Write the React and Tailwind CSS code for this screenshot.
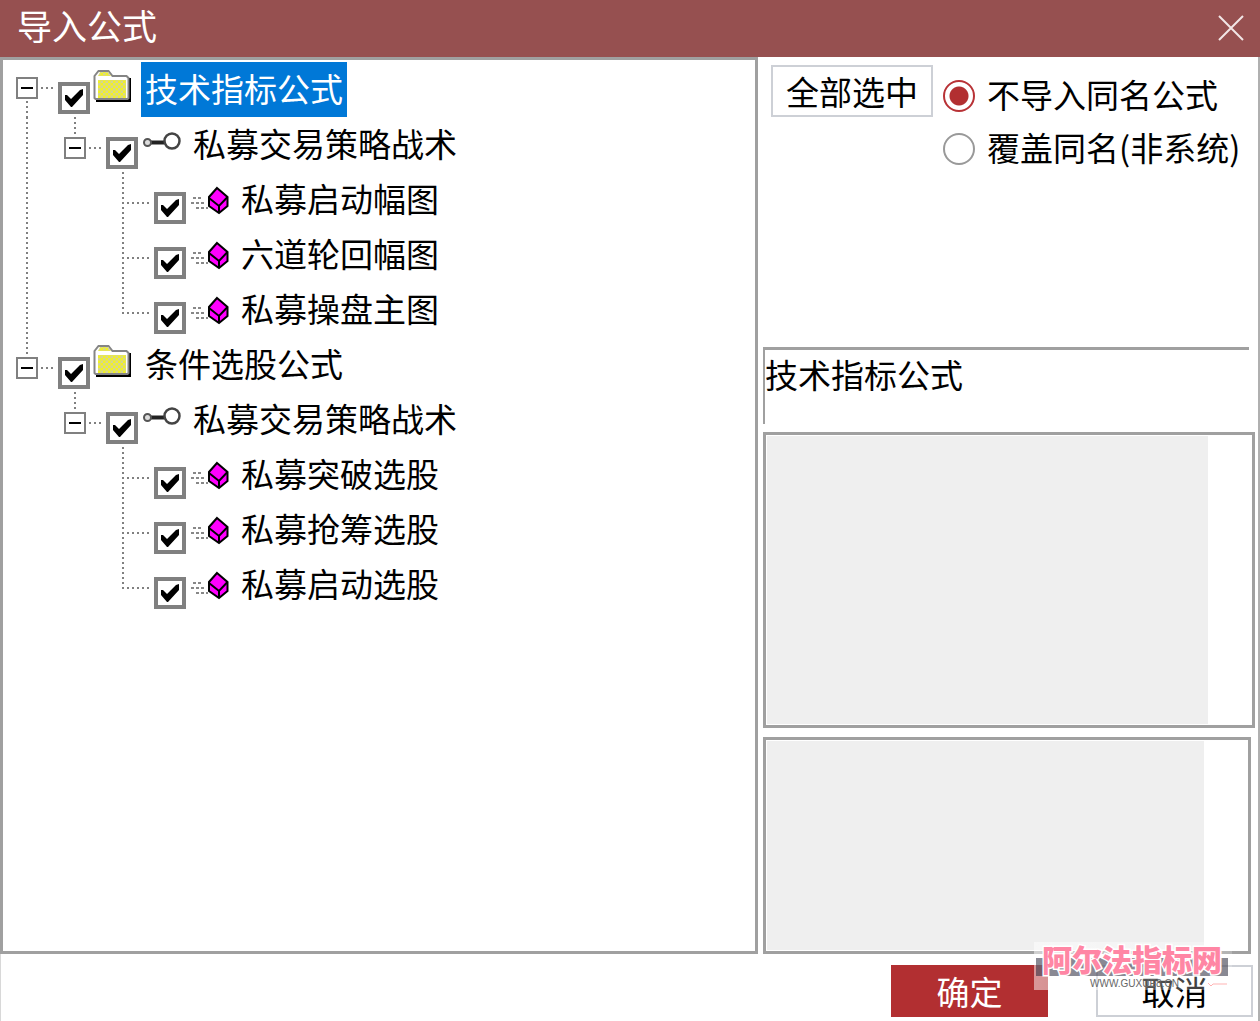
import { useState } from 'react';

const TREE = [
    {
        label: '技术指标公式',
        children: [
            { label: '私募交易策略战术', children: [{ label: '私募启动幅图' }, { label: '六道轮回幅图' }, { label: '私募操盘主图' }] },
        ],
    },
    {
        label: '条件选股公式',
        children: [
            { label: '私募交易策略战术', children: [{ label: '私募突破选股' }, { label: '私募抢筹选股' }, { label: '私募启动选股' }] },
        ],
    },
];

const V_DOTS = 'w-0.5 bg-[repeating-linear-gradient(to_bottom,#808080_0_2px,transparent_2px_5px)]';
const H_DOTS = 'h-0.5 bg-[repeating-linear-gradient(to_right,#808080_0_2px,transparent_2px_5px)]';

const FolderIcon = () => (
    <svg className="size-10" viewBox="0 0 40 40" aria-hidden="true">
        <defs>
            <pattern id="dither" width="5" height="5" patternUnits="userSpaceOnUse">
                <rect width="5" height="5" fill="#f2f224" />
                <rect width="2.500" height="2.500" fill="#d6d690" />
                <rect x="2.500" y="2.500" width="2.500" height="2.500" fill="#d6d690" />
            </pattern>
        </defs>
        <path d="M3 31h31V10h4v24H3z" fill="#000" />
        <path d="M1.500 30V8l4-5h10l4 5h14l2 2v20l-1 1h-32z" fill="#fff" stroke="#858585" strokeWidth="2" />
        <path d="M5 8l2-4h8l3 4H5z" fill="url(#dither)" />
        <path d="M5 12h28v18H5z" fill="url(#dither)" />
    </svg>
);

const KeyIcon = () => (
    <svg className="size-10" viewBox="0 0 40 40" fill="none" aria-hidden="true">
        <path d="M10 19.500h13" stroke="#222" strokeWidth="4" />
        <circle cx="6.500" cy="19.500" r="3.500" fill="#ddd" stroke="#555" strokeWidth="2" />
        <circle cx="31" cy="18" r="7.500" fill="#fff" stroke="#444" strokeWidth="2.500" />
    </svg>
);

const CubeIcon = () => (
    <svg className="size-10" viewBox="0 0 40 40" aria-hidden="true">
        <g fill="none" stroke="#888" strokeWidth="2" strokeDasharray="3 2">
            <path d="M4 20h10" />
            <path d="M2 25h15" />
            <path d="M7 30h12" />
        </g>
        <path d="M28 10l10.500 9v9L30 35l-10-7v-9z" fill="#f0f" stroke="#000" strokeWidth="2" />
        <path d="M20 20l10 8 8.500-9M30 28v7" fill="none" stroke="#000" strokeWidth="2" />
    </svg>
);

const ICONS = [FolderIcon, KeyIcon, CubeIcon];

const TreeCheckbox = ({ label }) => (
    <span className="mt-5 grid size-8 shrink-0 self-start">
        <input
            type="checkbox"
            defaultChecked
            aria-label={label}
            className="peer col-start-1 row-start-1 size-8 appearance-none border-4 border-[#808080] bg-white"
        />
        <svg
            className="pointer-events-none invisible col-start-1 row-start-1 size-8 peer-checked:visible"
            viewBox="0 0 32 32"
            aria-hidden="true"
        >
            <path d="M7 13h2l4 4 9-9 3-1v6L14 25h-1l-6-7z" fill="#000" />
        </svg>
    </span>
);

const GUIDE = 'grid h-[55px] w-12 shrink-0 grid-cols-[22px_1fr] pl-1.5';
const GUIDE_ROWS = 'grid-rows-[20px_22px_1fr]';
const GUIDE_ROWS_FIRST = 'grid-rows-[15px_22px_1fr]';

// Column left of an item: a pass-through line for each ancestor
const PassGuide = ({ line }) => (
    <span className={`${GUIDE} ${GUIDE_ROWS}`}>
        {line && <span className={`${V_DOTS} col-start-1 row-span-3 row-start-1 justify-self-center`} />}
    </span>
);

const BranchGuide = ({ first, last, open, onToggle, label }) => (
    <span className={`${GUIDE} ${first ? GUIDE_ROWS_FIRST : GUIDE_ROWS}`}>
        {!first && <span className={`${V_DOTS} col-start-1 row-start-1 justify-self-center`} />}
        <button
            type="button"
            onClick={onToggle}
            aria-expanded={open}
            aria-label={label}
            className="col-start-1 row-start-2 grid place-items-center border-2 border-[#808080] bg-white"
        >
            <span className="h-0.5 w-3 bg-black" />
        </button>
        <span className={`${H_DOTS} col-start-2 row-start-2 mr-1 ml-[3px] self-center`} />
        {!last && <span className={`${V_DOTS} col-start-1 row-start-3 mt-0.5 justify-self-center`} />}
    </span>
);

const LeafGuide = ({ last }) => (
    <span className={`${GUIDE} ${GUIDE_ROWS}`}>
        <span className={`${V_DOTS} col-start-1 row-start-1 justify-self-center ${last ? 'h-8' : 'h-[55px]'}`} />
        <span className={`${H_DOTS} col-span-2 col-start-1 row-start-2 mr-1 ml-[15px] self-center`} />
    </span>
);

const TreeItem = ({ node, level, first, last, lines, path, selected, onSelect }) => {
    const [open, setOpen] = useState(true);
    const Icon = ICONS[level];
    const active = selected === path;

    return (
        <li>
            <div className="flex h-[55px] items-center">
                {lines.map((line, i) => <PassGuide key={i} line={line} />)}
                {node.children
                    ? <BranchGuide first={first} last={last} open={open} onToggle={() => setOpen(!open)} label={node.label} />
                    : <LeafGuide last={last} />}
                <TreeCheckbox label={node.label} />
                <span className="mt-1.5 ml-[3px] shrink-0 self-start"><Icon /></span>
                <button
                    type="button"
                    onClick={() => onSelect(path)}
                    className={`ml-2 h-[55px] px-1 pb-1 whitespace-nowrap ${active ? 'bg-[#0078d7] text-white' : ''}`}
                >
                    {node.label}
                </button>
            </div>
            {node.children && open && (
                <ul>
                    {node.children.map((child, i) => (
                        <TreeItem
                            key={child.label}
                            node={child}
                            level={level + 1}
                            last={i === node.children.length - 1}
                            lines={[...lines, !last]}
                            path={`${path}-${i}`}
                            selected={selected}
                            onSelect={onSelect}
                        />
                    ))}
                </ul>
            )}
        </li>
    );
};

const RadioOption = ({ children, ...props }) => (
    <label className="flex h-[53px] items-center gap-3 whitespace-nowrap">
        <input
            type="radio"
            name="duplicates"
            className="size-8 shrink-0 appearance-none rounded-full border-2 border-[#999] bg-white checked:border-[#b83236] checked:bg-[radial-gradient(circle,#b22f31_9px,#fff_10px)]"
            {...props}
        />
        <span className="pb-1">{children}</span>
    </label>
);

const Watermark = () => (
    <div className="pointer-events-none absolute right-[26px] bottom-[31px] h-12 w-[198px] bg-linear-to-r from-white/50 to-white/20">
        <div className="absolute top-4 left-0.5 h-[18px] w-48 bg-[#28283a]/55" />
        <div className="absolute top-0 left-2 text-[30px] leading-8 font-black whitespace-nowrap text-[#ff86a4] [-webkit-text-stroke:3px_white] [paint-order:stroke_fill]">
            阿尔法指标网
        </div>
        <div className="absolute top-9 left-14 font-['Liberation_Sans',sans-serif] text-[10px] leading-3 text-[#666]">
            WWW.GUXUE8.CN
        </div>
        <svg className="absolute top-10 right-1 h-1.5 w-5" viewBox="0 0 20 6" fill="none" stroke="#ffb3b3" aria-hidden="true">
            <path d="M0 1l3 3 2-2h14" />
        </svg>
    </div>
);

const App = () => {
    const [selected, setSelected] = useState('0');

    return (
        <div className="relative flex min-h-screen flex-col border-r-2 border-[#b0b0b0] bg-white font-['Noto_Sans_CJK_SC',sans-serif] text-[33px] leading-10 text-black">
            <header className="-mr-0.5 flex h-[57px] items-center justify-between bg-[#965050] pr-4 pl-[17px] text-white">
                <h1 className="pb-2 text-[35px] leading-10">导入公式</h1>
                <button type="button" aria-label="关闭">
                    <svg className="size-7" viewBox="0 0 28 28" stroke="#f2e6e6" strokeWidth="2" aria-hidden="true">
                        <path d="M3 1l24 24M27 1L3 25" />
                    </svg>
                </button>
            </header>

            <main className="grid flex-1 grid-cols-[1fr_500px]">
                <div className="border-3 border-[#a0a0a0] pt-0.5 pl-[7px]">
                    <ul>
                        {TREE.map((node, i) => (
                            <TreeItem
                                key={node.label}
                                node={node}
                                level={0}
                                first={i === 0}
                                last={i === TREE.length - 1}
                                lines={[]}
                                path={`${i}`}
                                selected={selected}
                                onSelect={setSelected}
                            />
                        ))}
                    </ul>
                </div>

                <div className="flex flex-col pl-[5px]">
                    <div className="flex h-[290px] items-start gap-2.5 pt-2 pl-2">
                        <button type="button" className="h-[52px] w-[162px] shrink-0 border-2 border-[#cdd0d6] whitespace-nowrap">
                            全部选中
                        </button>
                        <div className="pt-1">
                            <RadioOption defaultChecked>不导入同名公式</RadioOption>
                            <RadioOption>覆盖同名(非系统)</RadioOption>
                        </div>
                    </div>
                    <div className="mr-[9px] mb-2 h-[77px] border-t-3 border-l-2 border-[#a0a0a0] pt-1">技术指标公式</div>
                    <div className="mr-[3px] mb-[9px] flex-11 border-3 border-[#a0a0a0] p-px pr-11">
                        <div className="h-full bg-[#efefef]" />
                    </div>
                    <div className="mr-[7px] flex-8 border-3 border-[#a0a0a0] p-px pr-11">
                        <div className="h-full bg-[#efefef]" />
                    </div>
                </div>
            </main>

            <footer className="flex h-[67px] items-start justify-end gap-12 border-l border-[#d8d8d8] pt-[11px] pr-[5px]">
                <button type="button" className="h-[52px] w-[157px] bg-[#b22f31] text-white">确定</button>
                <button type="button" className="h-[52px] w-[157px] border-2 border-[#cdd0d6]">取消</button>
            </footer>

            <Watermark />
        </div>
    );
};

export default App;
